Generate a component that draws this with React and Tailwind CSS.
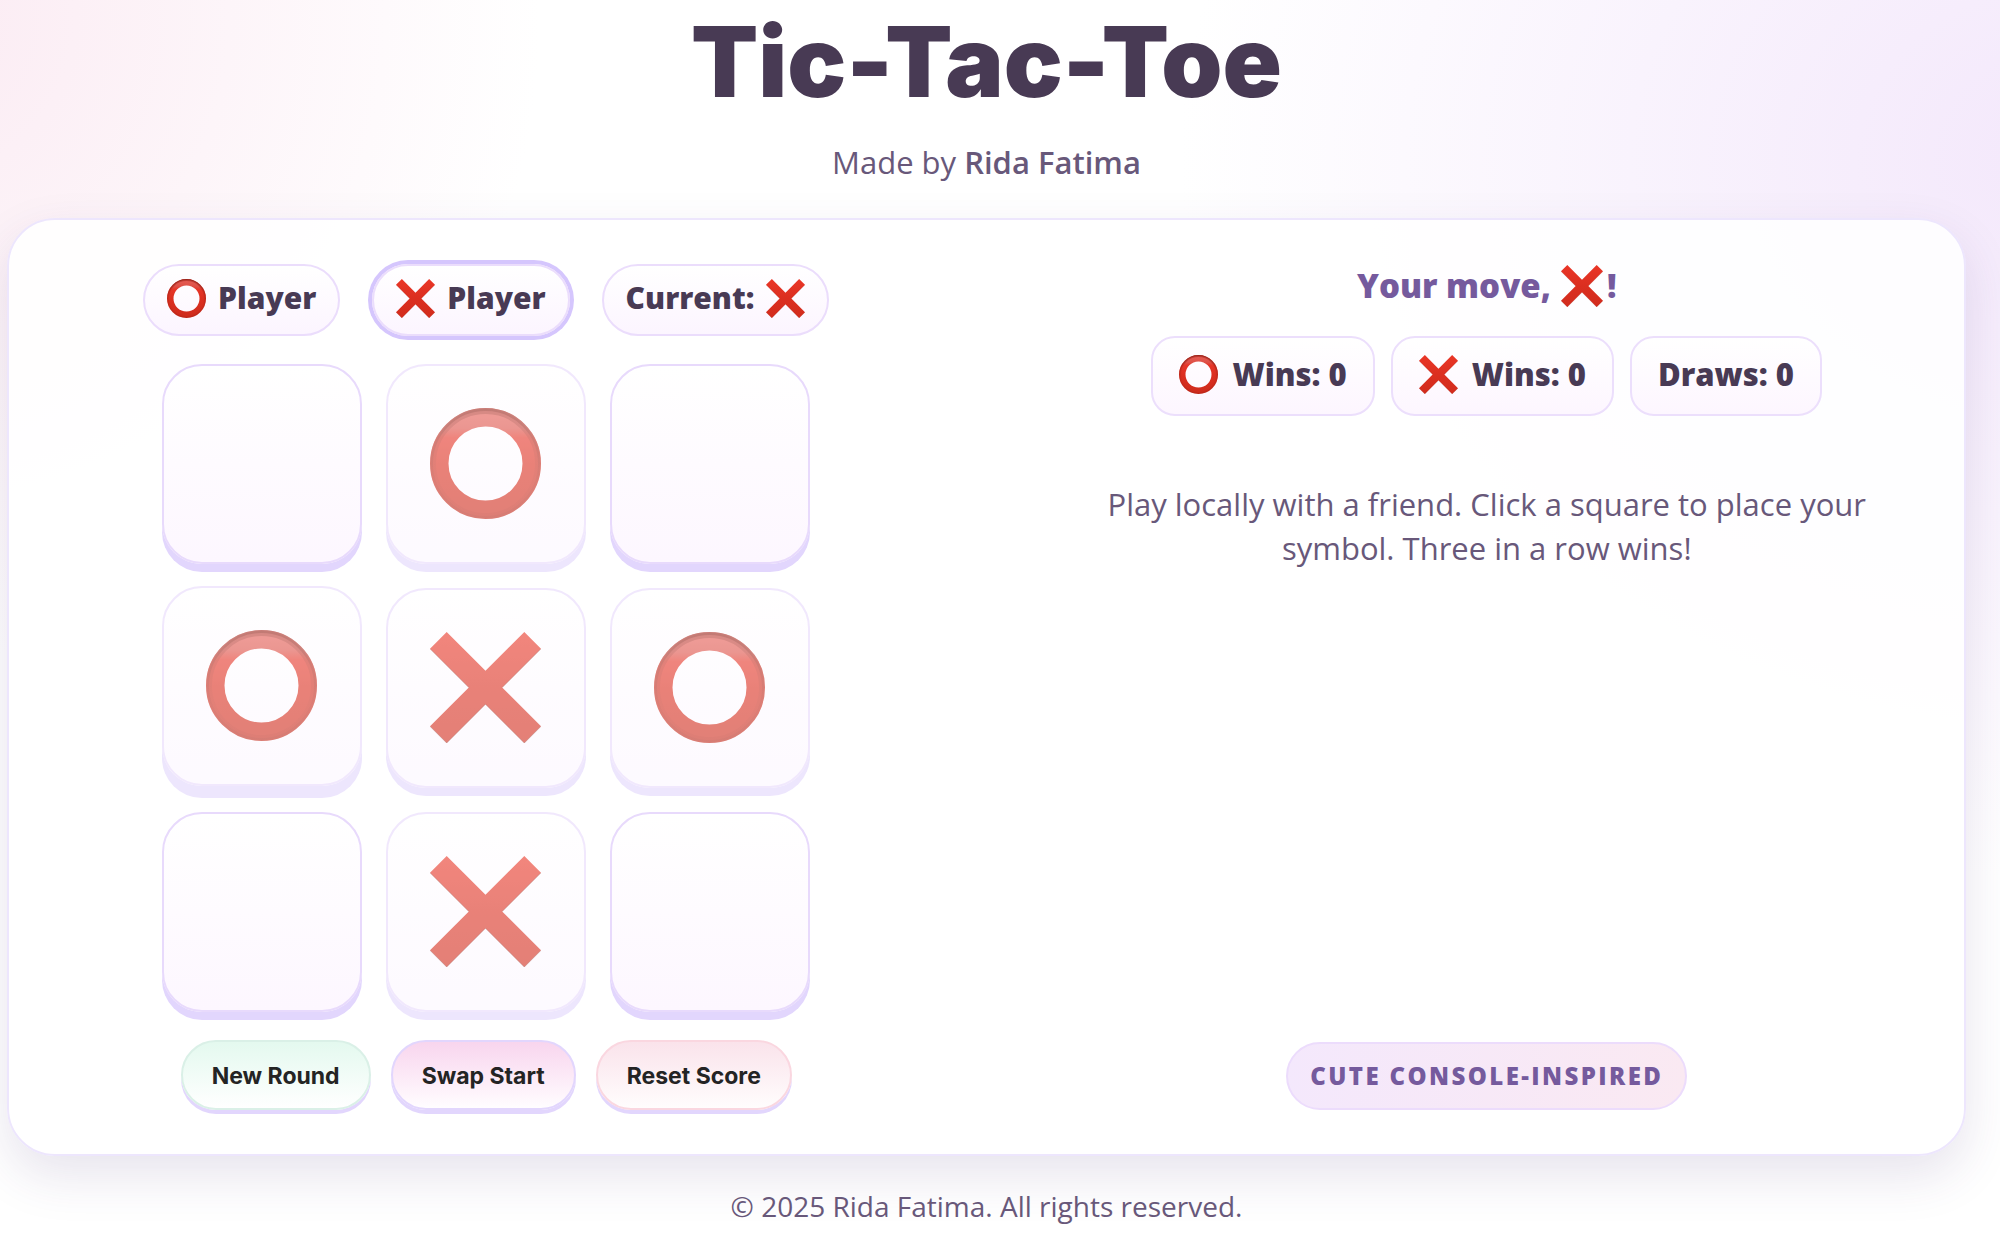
import { useId, useState } from 'react';

function Ring({ className }) {
  const id = useId();
  return (
    <svg viewBox="0 0 111 111" className={className} role="img" aria-label="O">
      <defs>
        <linearGradient id={`${id}a`} x1="0" y1="0" x2="0" y2="1">
          <stop offset="0" stopColor="#e35850" />
          <stop offset="0.12" stopColor="#de5148" />
          <stop offset="0.22" stopColor="#e63528" />
          <stop offset="0.5" stopColor="#dc2f20" />
          <stop offset="1" stopColor="#d02c1d" />
        </linearGradient>
        <linearGradient id={`${id}b`} x1="0" y1="0" x2="0" y2="1">
          <stop offset="0" stopColor="#8f1a10" stopOpacity="0.75" />
          <stop offset="0.3" stopColor="#8f1a10" stopOpacity="0.4" />
          <stop offset="0.7" stopColor="#8f1a10" stopOpacity="0.15" />
          <stop offset="1" stopColor="#8f1a10" stopOpacity="0.2" />
        </linearGradient>
      </defs>
      <circle cx="55.5" cy="55.5" r="46.25" fill="none" stroke={`url(#${id}a)`} strokeWidth="18.5" />
      <circle cx="55.5" cy="55.5" r="54" fill="none" stroke={`url(#${id}b)`} strokeWidth="3" />
      <circle cx="55.5" cy="55.5" r="52" fill="none" stroke={`url(#${id}b)`} strokeWidth="5" opacity="0.6" />
    </svg>
  );
}

function Cross({ className }) {
  const id = useId();
  const d = 'M16.7 0 55.5 38.8 94.3 0 111 16.7 72.2 55.5 111 94.3 94.3 111 55.5 72.2 16.7 111 0 94.3 38.8 55.5 0 16.7Z';
  return (
    <svg viewBox="0 0 111 111" className={className} role="img" aria-label="X">
      <defs>
        <linearGradient id={id} x1="0" y1="0" x2="0" y2="1">
          <stop offset="0" stopColor="#ea3627" />
          <stop offset="0.5" stopColor="#db2f20" />
          <stop offset="1" stopColor="#d22c1d" />
        </linearGradient>
      </defs>
      <path d={d} fill={`url(#${id})`} />
      <path d="M0 16.7 38.8 55.5M111 16.7 72.2 55.5M0 94.3 16.7 111 55.5 72.2 94.3 111 111 94.3" fill="none" stroke="#7d1a10" strokeOpacity="0.45" strokeWidth="1" />
    </svg>
  );
}

function Mark({ symbol, className }) {
  return symbol === 'O' ? <Ring className={className} /> : <Cross className={className} />;
}

function Chip({ active, children }) {
  return (
    <div
      className={`flex h-[72px] items-center gap-3 rounded-full border-2 border-[#ebddfc] bg-linear-to-b from-white to-[#fcf5ff] px-[22px] pb-1 ${
        active ? 'shadow-[0_0_0_4px_#d5c6fd]' : ''
      }`}
    >
      {children}
    </div>
  );
}

function Stat({ children }) {
  return (
    <li className="flex h-20 items-center gap-[14px] rounded-3xl border-2 border-[#ecdffc] bg-linear-to-b from-white to-[#fdf6ff] px-[26px] pb-1">
      {children}
    </li>
  );
}

function Cell({ value, raised, onPlay, index }) {
  const tone = value ? 'opacity-60' : '';
  const lift = raised ? '-translate-y-0.5 shadow-[0_12px_0_#e2d6fd]' : 'shadow-[0_8px_0_#e2d6fd]';
  return (
    <button
      type="button"
      disabled={Boolean(value)}
      onClick={onPlay}
      aria-label={value ? `Square ${index + 1}, ${value}` : `Square ${index + 1}, empty`}
      className={`flex size-[200px] items-center justify-center rounded-[40px] border-2 border-[#e8dafc] bg-linear-to-b from-white to-[#fdf7ff] pr-0.5 pb-0.5 ${tone} ${lift}`}
    >
      {value && <Mark symbol={value} className="size-[111px]" />}
    </button>
  );
}

const START = ['', 'O', '', 'O', 'X', 'O', '', 'X', ''];

const actions = [
  { label: 'New Round', tone: 'from-[#e4f9ef] to-white border-[#daf0e7]' },
  { label: 'Swap Start', tone: 'from-[#f8d5ee] to-[#fffdff] border-[#e2d6fd]' },
  { label: 'Reset Score', tone: 'from-[#fae3eb] to-[#fffdfd] border-[#fad7e0]' },
];

export default function App() {
  const [board, setBoard] = useState(START);
  const [turn, setTurn] = useState('X');

  const play = (i) => {
    setBoard(board.map((v, k) => (k === i ? turn : v)));
    setTurn(turn === 'X' ? 'O' : 'X');
  };

  const handlers = [
    () => setBoard(Array(9).fill('')),
    () => setTurn(turn === 'X' ? 'O' : 'X'),
    () => setBoard(Array(9).fill('')),
  ];

  return (
    <div className="min-h-screen bg-white bg-[radial-gradient(900px_720px_at_104%_160px,#f3e7fb,transparent),radial-gradient(620px_640px_at_-80px_20px,#fbebf3,transparent)] bg-no-repeat pt-[10px] pr-[34px] pb-2 pl-[7px] font-['Open_Sans',sans-serif] text-[#483a54]">
      <header className="text-center">
        <h1 className="font-[Inter,sans-serif] text-[98px] leading-[104px] font-black">Tic-Tac-Toe</h1>
        <p className="mt-[26px] text-[31px] leading-[44px] text-[#68587a]">
          Made by <strong className="font-semibold">Rida Fatima</strong>
        </p>
      </header>

      <main className="mt-[34px] grid grid-cols-2 gap-x-[134px] rounded-[48px] border-2 border-[#ede6fd] bg-white/90 p-11 shadow-[0_20px_50px_rgba(71,45,119,0.13)]">
        <section aria-label="Board" className="flex flex-col items-center gap-7">
          <div className="flex gap-8 text-[30px] leading-[44px] font-extrabold whitespace-nowrap">
            <Chip active={turn === 'O'}>
              <Ring className="size-[39px]" />
              <span>Player</span>
            </Chip>
            <Chip active={turn === 'X'}>
              <Cross className="size-[39px]" />
              <span>Player</span>
            </Chip>
            <Chip>
              <span>Current:</span>
              <Mark symbol={turn} className="size-[39px]" />
            </Chip>
          </div>

          <div className="grid grid-cols-3 gap-6">
            {board.map((v, i) => (
              <Cell key={i} index={i} value={v} raised={i === 3} onPlay={() => play(i)} />
            ))}
          </div>

          <div className="flex gap-5">
            {actions.map((a, i) => (
              <button
                key={a.label}
                type="button"
                onClick={handlers[i]}
                className={`h-[70px] rounded-full border-2 bg-linear-to-b px-[29px] pt-0.5 font-[Inter,sans-serif] text-[23px] font-bold whitespace-nowrap text-[#242424] shadow-[0_4px_0_#e2d6fd] ${a.tone}`}
              >
                {a.label}
              </button>
            ))}
          </div>
        </section>

        <section aria-label="Score" className="flex flex-col items-center">
          <h2 className="flex items-center text-[33px] leading-[44px] font-extrabold text-[#755a9d]">
            Your move,
            <Mark symbol={turn} className="mr-1 ml-2.5 size-[42px]" />!
          </h2>
          <ul className="mt-7 flex gap-4 text-[31px] leading-[44px] font-extrabold whitespace-nowrap">
            <Stat>
              <Ring className="size-[39px]" />
              Wins: 0
            </Stat>
            <Stat>
              <Cross className="size-[39px]" />
              Wins: 0
            </Stat>
            <Stat>Draws: 0</Stat>
          </ul>
          <p className="mt-[66px] max-w-[800px] text-center text-[31px] leading-[44px] text-[#68587a]">
            Play locally with a friend. Click a square to place your symbol. Three in a row wins!
          </p>
          <div className="mt-auto flex h-[68px] items-center rounded-full border-2 border-[#ecdcfc] bg-linear-to-r from-[#f4e8fc] to-[#fae9f2] px-[22px] text-[24px] font-extrabold tracking-widest whitespace-nowrap text-[#755a9d] uppercase">
            Cute console-inspired
          </div>
        </section>
      </main>

      <footer className="mt-[30px] text-center text-[28px] leading-[40px] text-[#68587a]">
        © 2025 Rida Fatima. All rights reserved.
      </footer>
    </div>
  );
}
